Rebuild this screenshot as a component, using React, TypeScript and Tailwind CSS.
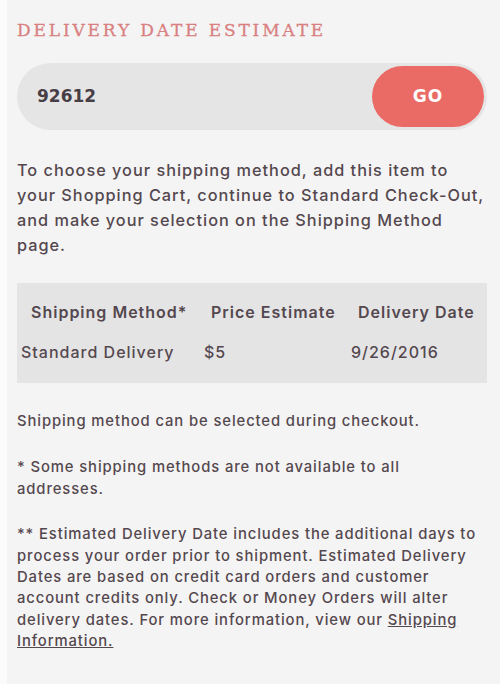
import React from 'react';

const rows = [
  { method: 'Standard Delivery', price: '$5', date: '9/26/2016' },
];

const App = () => {
  return (
    <div className="flex min-h-[684px] w-[500px] bg-[#f4f4f4] font-['Inter',sans-serif] font-medium text-[#54484f]">
      <div className="w-[7px] shrink-0 bg-[#fbfbfb]" />
      <div className="flex-1 pl-[10px] pr-[13px] pt-[19px]">
        {/* heading */}
        <h2 className="font-['DejaVu_Serif',serif] text-[17px] font-normal leading-[22px] tracking-[2.85px] text-[#d98080] [-webkit-text-stroke:0.3px_#d98080]">
          DELIVERY DATE ESTIMATE
        </h2>

        {/* zip code */}
        <div className="mt-[22px] flex h-[67px] items-center rounded-full bg-[#e6e5e6] pl-[20px] pr-[3px]">
          <span className="flex-1 font-['DejaVu_Sans',sans-serif] text-[17px] font-bold text-[#483e46]">92612</span>
          <button className="h-[61px] w-[112px] rounded-full bg-[#ea6a66] font-['DejaVu_Sans',sans-serif] text-[17px] font-bold tracking-[1px] text-white">
            GO
          </button>
        </div>

        <p className="mt-[28px] text-[16.3px] leading-[25px] tracking-[1px]">
          To choose your shipping method, add this item to<br />
          your Shopping Cart, continue to Standard Check-Out,<br />
          and make your selection on the Shipping Method<br />
          page.
        </p>

        {/* estimate table */}
        <div className="mt-[25px] bg-[#e5e4e5] pb-[19px] pt-[17px]">
          <div className="grid grid-cols-[187px_147px_1fr] text-[16px] font-semibold leading-[24px] tracking-[1px]">
            <div className="pl-[14px]">Shipping Method*</div>
            <div className="pl-[7px]">Price Estimate</div>
            <div className="pl-[7px]">Delivery Date</div>
          </div>
          {rows.map((r) => (
            <div key={r.method} className="mt-[16px] grid grid-cols-[187px_147px_1fr] text-[16px] leading-[24px] tracking-[1px]">
              <div className="pl-[4px]">{r.method}</div>
              <div className="pl-0">{r.price}</div>
              <div className="pl-0">{r.date}</div>
            </div>
          ))}
        </div>

        <div className="mt-[28px] text-[14.8px] leading-[21.4px] tracking-[0.9px]">
          <p>Shipping method can be selected during checkout.</p>
          <p className="mt-[25px]">
            * Some shipping methods are not available to all<br />
            addresses.
          </p>
          <p className="mt-[24px]">
            ** Estimated Delivery Date includes the additional days to<br />
            process your order prior to shipment. Estimated Delivery<br />
            Dates are based on credit card orders and customer<br />
            account credits only. Check or Money Orders will alter<br />
            delivery dates. For more information, view our{' '}
            <a className="underline">Shipping</a>
            <br />
            <a className="underline">Information.</a>
          </p>
        </div>
      </div>
    </div>
  );
};

export default App;
